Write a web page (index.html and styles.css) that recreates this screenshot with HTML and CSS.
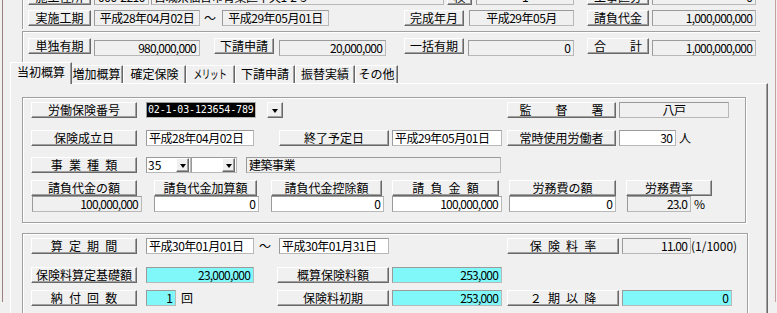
FILE: index.html
```html
<!DOCTYPE html>
<html lang="ja">
<head>
<meta charset="utf-8">
<title>概算保険料</title>
<link rel="stylesheet" href="styles.css">
</head>
<body>
<div class="screen">
  <div class="form">
    <div class="group g-top">
      <div class="row r-a">
        <div class="btn w63 ml5">施工住所</div>
        <div class="fld gray w55 ml3 c">000-2210</div>
        <div class="fld gray w293 ml2">宮城県仙台市青葉区中央1-2-3</div>
        <div class="btn w25 ml3">検</div>
        <div class="fld gray w98 ml4 c">1</div>
        <div class="btn w62 ml13">工事区分</div>
        <div class="fld gray w104 ml3 r num">0</div>
      </div>
      <div class="row r-b">
        <div class="btn w63 ml5">実施工期</div>
        <div class="fld gray w106 ml3 c">平成28年04月02日</div>
        <div class="lbl w10 ml4">～</div>
        <div class="fld gray w107 ml8 c">平成29年05月01日</div>
        <div class="btn w60 ml75">完成年月</div>
        <div class="fld gray w105 ml5 c">平成29年05月</div>
        <div class="btn w62 ml13">請負代金</div>
        <div class="fld gray w104 ml3 r num">1,000,000,000</div>
      </div>
    </div>

    <div class="group g-sum">
      <div class="row r-sum">
        <div class="btn w63 ml5">単独有期</div>
        <div class="fld gray w106 ml3 r num">980,000,000</div>
        <div class="btn w60 ml14">下請申請</div>
        <div class="fld gray w107 ml5 r num">20,000,000</div>
        <div class="btn w60 ml18">一括有期</div>
        <div class="fld gray w106 ml4 r num">0</div>
        <div class="btn w62 ml13">合　　計</div>
        <div class="fld gray w104 ml3 r num">1,000,000,000</div>
      </div>
    </div>

    <div class="tabs">
      <div class="tab active">当初概算</div>
      <div class="tab t53">増加概算</div>
      <div class="tab t63">確定保険</div>
      <div class="tab t49"><span class="narrow">メリット</span></div>
      <div class="tab t60">下請申請</div>
      <div class="tab t60">振替実績</div>
      <div class="tab t43">その他</div>
    </div>

    <div class="panel">
      <div class="group g-a">
        <div class="row">
          <div class="btn w106 ml8">労働保険番号</div>
          <div class="fld sel w110 ml9"><span class="hl">02-1-03-123654-789</span></div>
          <div class="dd ml11"><span class="arrow"></span></div>
          <div class="btn w109 ml224">監　　督　　署</div>
          <div class="fld gray w110 ml3 c">八戸</div>
        </div>
        <div class="row mt12">
          <div class="btn w106 ml8">保険成立日</div>
          <div class="fld w108 ml9">平成28年04月02日</div>
          <div class="btn w110 ml25">終了予定日</div>
          <div class="fld w110 ml3">平成29年05月01日</div>
          <div class="btn w109 ml5">常時使用労働者</div>
          <div class="fld w57 ml3 r num">30</div>
          <div class="lbl ml3">人</div>
        </div>
        <div class="row mt11">
          <div class="btn w106 ml8 sp">事 業 種 類</div>
          <div class="combo w45 ml9"><span class="ctext">35</span><span class="dd"><span class="arrow"></span></span></div>
          <div class="combo w46"><span class="ctext"></span><span class="dd"><span class="arrow"></span></span></div>
          <div class="fld gray w255 ml9">建築事業</div>
        </div>
        <div class="row mt7">
          <div class="btn w106 ml8">請負代金の額</div>
          <div class="btn w103 ml17">請負代金加算額</div>
          <div class="btn w111 ml14">請負代金控除額</div>
          <div class="btn w107 ml10 sp">請 負 金 額</div>
          <div class="btn w107 ml10">労務費の額</div>
          <div class="btn w86 ml10">労務費率</div>
        </div>
        <div class="row">
          <div class="fld gray w110 ml9 r num">100,000,000</div>
          <div class="fld w105 ml12 r num">0</div>
          <div class="fld w113 ml12 r num">0</div>
          <div class="fld w110 ml8 r num">100,000,000</div>
          <div class="fld w107 ml7 r num">0</div>
          <div class="fld gray w64 ml11 r num">23.0</div>
          <div class="lbl ml3">%</div>
        </div>
      </div>

      <div class="group g-b">
        <div class="row">
          <div class="btn w106 ml8 sp">算 定 期 間</div>
          <div class="fld w108 ml9">平成30年01月01日</div>
          <div class="lbl w10 ml5">～</div>
          <div class="fld w110 ml10">平成30年01月31日</div>
          <div class="btn w112 ml118 sp">保 険 料 率</div>
          <div class="fld gray w69 ml3 r num">11.00</div>
          <div class="lbl">(1/1000)</div>
        </div>
        <div class="row mt13">
          <div class="btn w106 ml8">保険料算定基礎額</div>
          <div class="fld cyan w108 ml9 r num">23,000,000</div>
          <div class="btn w112 ml23">概算保険料額</div>
          <div class="fld cyan w110 ml3 r num">253,000</div>
        </div>
        <div class="row mt7">
          <div class="btn w106 ml8 sp">納 付 回 数</div>
          <div class="fld cyan w30 ml9 r num">1</div>
          <div class="lbl w12 ml5">回</div>
          <div class="btn w112 ml84">保険料初期</div>
          <div class="fld cyan w110 ml3 r num">253,000</div>
          <div class="btn w112 ml5 sp">２ 期 以 降</div>
          <div class="fld cyan w110 ml3 r num">0</div>
        </div>
      </div>
    </div>
  </div>
</div>
</body>
</html>
```
FILE: styles.css
```css
* { box-sizing: border-box; margin: 0; padding: 0; }

body {
  margin: 0;
  background: #f0f0f0;
  font-family: "Noto Sans CJK JP", "Noto Sans", sans-serif;
  font-size: 12px;
  color: #000;
}

.screen {
  width: 777px;
  height: 313px;
  overflow: hidden;
  background: #f0f0f0;
  padding-left: 2px;
}

.form {
  width: 774px;
  height: 100%;
  border-left: 1px solid #9c7f7f;
  border-right: 1px solid #c9a0a0;
}

/* etched group boxes */
.group {
  border-left: 1px solid #a0a0a0;
  border-top: 1px solid #a0a0a0;
  box-shadow: inset 1px 1px 0 #fff;
}

.g-top {
  margin-left: 19px;
  width: 738px;
  margin-top: -11px;
  border-top: none;
  box-shadow: inset 1px 0 0 #fff;
  padding-bottom: 3px;
}
.g-top .r-b { margin-top: 5px; }

.g-sum {
  margin-left: 19px;
  margin-top: 2px;
  width: 738px;
  padding-top: 6px;
  height: 31px;
}
.r-sum { height: 17px; }
.r-sum .fld { margin-top: 2px; height: 16px; }

.row {
  display: flex;
  align-items: stretch;
  height: 16px;
}

.btn {
  flex: none;
  background: #f0f0f0;
  border: 1px solid;
  border-color: #fff #696969 #696969 #fff;
  box-shadow: inset -1px -1px 0 #a0a0a0;
  text-align: center;
  line-height: 13px;
  white-space: nowrap;
  overflow: hidden;
}

.fld {
  flex: none;
  background: #fff;
  border: 1px solid;
  border-color: #9a9a9a #b8b8b8 #b8b8b8 #9a9a9a;
  line-height: 13px;
  padding: 0 2px;
  white-space: nowrap;
  overflow: hidden;
  letter-spacing: -0.5px;
}
.fld.gray { background: #f0f0f0; }
.fld.cyan { background: #80f8fa; }
.fld.r { text-align: right; padding-right: 3px; }
.fld.c { text-align: center; }
.num { letter-spacing: -0.8px; }

.fld.sel {
  padding: 0;
  font-family: "DejaVu Sans Mono", "Liberation Mono", monospace;
  font-size: 10px;
  letter-spacing: -0.15px;
}
.hl {
  display: block;
  height: 100%;
  background: #000;
  color: #fff;
  line-height: 14px;
  padding-left: 1px;
}

.lbl {
  flex: none;
  line-height: 15px;
  white-space: nowrap;
}

.sp { word-spacing: 3.5px; }

/* combo boxes */
.combo {
  flex: none;
  display: flex;
  background: #fff;
  border: 1px solid;
  border-color: #9a9a9a #b8b8b8 #b8b8b8 #9a9a9a;
  line-height: 13px;
}
.ctext { flex: 1; padding-left: 1px; }
.dd {
  flex: none;
  width: 16px;
  height: 16px;
  background: #f0f0f0;
  border: 1px solid;
  border-color: #fff #696969 #696969 #fff;
  box-shadow: inset -1px -1px 0 #a0a0a0;
  display: flex;
  align-items: center;
  justify-content: center;
}
.combo .dd { width: 13px; height: 14px; margin-right: 1px; }
.arrow {
  width: 0;
  height: 0;
  border-left: 3.5px solid transparent;
  border-right: 3.5px solid transparent;
  border-top: 4px solid #000;
  margin-top: 1px;
}

/* tabs */
.tabs {
  display: flex;
  align-items: flex-end;
  height: 21px;
  margin-left: 7px;
  position: relative;
  z-index: 1;
}
.tab {
  flex: none;
  height: 18px;
  background: #f0f0f0;
  border: 1px solid;
  border-bottom: none;
  border-color: #fff #696969 transparent #fff;
  box-shadow: inset -1px 0 0 #a0a0a0;
  text-align: center;
  line-height: 16px;
  white-space: nowrap;
}
.tab.active {
  width: 62px;
  height: 22px;
  margin-bottom: -1px;
  margin-right: -2px;
  line-height: 18px;
  position: relative;
  z-index: 2;
}
.narrow {
  display: inline-block;
  transform: scaleX(0.72);
  letter-spacing: -0.5px;
}
.t53 { width: 53px; }
.t63 { width: 63px; }
.t49 { width: 49px; }
.t60 { width: 60px; }
.t43 { width: 43px; }

.panel {
  margin-left: 7px;
  width: 758px;
  height: 240px;
  border: 1px solid;
  border-color: #fff #696969 #696969 #fff;
  box-shadow: inset -1px -1px 0 #a0a0a0;
  padding: 13px 0 0 11px;
}

.g-a {
  width: 724px;
  border-right: 1px solid #a0a0a0;
  border-bottom: 1px solid #a0a0a0;
  box-shadow: inset 1px 1px 0 #fff, 1px 1px 0 #fff;
  padding-top: 4px;
  padding-bottom: 10px;
}
.g-b {
  width: 726px;
  margin-top: 10px;
  border-right: 1px solid #a0a0a0;
  box-shadow: inset 1px 1px 0 #fff, 1px 0 0 #fff;
  padding-top: 4px;
  height: 100px;
}

/* spacing utilities */
.mt7 { margin-top: 7px; }
.mt11 { margin-top: 11px; }
.mt12 { margin-top: 12px; }
.mt13 { margin-top: 13px; }

.ml2 { margin-left: 2px; }
.ml3 { margin-left: 3px; }
.ml4 { margin-left: 4px; }
.ml5 { margin-left: 5px; }
.ml7 { margin-left: 7px; }
.ml8 { margin-left: 8px; }
.ml9 { margin-left: 9px; }
.ml10 { margin-left: 10px; }
.ml11 { margin-left: 11px; }
.ml12 { margin-left: 12px; }
.ml13 { margin-left: 13px; }
.ml14 { margin-left: 14px; }
.ml17 { margin-left: 17px; }
.ml18 { margin-left: 18px; }
.ml23 { margin-left: 23px; }
.ml25 { margin-left: 25px; }
.ml75 { margin-left: 75px; }
.ml84 { margin-left: 84px; }
.ml118 { margin-left: 118px; }
.ml224 { margin-left: 224px; }

.w10 { width: 10px; }
.w12 { width: 12px; }
.w25 { width: 25px; }
.w30 { width: 30px; }
.w45 { width: 45px; }
.w46 { width: 46px; }
.w55 { width: 55px; }
.w57 { width: 57px; }
.w60 { width: 60px; }
.w62 { width: 62px; }
.w63 { width: 63px; }
.w64 { width: 64px; }
.w69 { width: 69px; }
.w86 { width: 86px; }
.w98 { width: 98px; }
.w103 { width: 103px; }
.w104 { width: 104px; }
.w105 { width: 105px; }
.w106 { width: 106px; }
.w107 { width: 107px; }
.w108 { width: 108px; }
.w109 { width: 109px; }
.w110 { width: 110px; }
.w111 { width: 111px; }
.w112 { width: 112px; }
.w113 { width: 113px; }
.w255 { width: 255px; }
.w293 { width: 293px; }
```
